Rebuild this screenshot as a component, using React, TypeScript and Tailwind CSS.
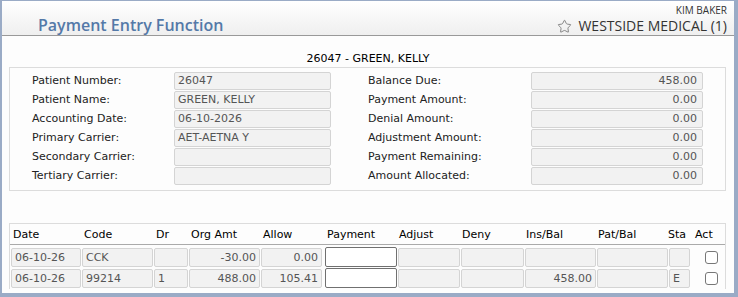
import { Star } from 'lucide-react';

const leftFields = [
  ['Patient Number:', '26047'],
  ['Patient Name:', 'GREEN, KELLY'],
  ['Accounting Date:', '06-10-2026'],
  ['Primary Carrier:', 'AET-AETNA Y'],
  ['Secondary Carrier:', ''],
  ['Tertiary Carrier:', ''],
];

const rightFields = [
  ['Balance Due:', '458.00'],
  ['Payment Amount:', '0.00'],
  ['Denial Amount:', '0.00'],
  ['Adjustment Amount:', '0.00'],
  ['Payment Remaining:', '0.00'],
  ['Amount Allocated:', '0.00'],
];

const rows = [
  { date: '06-10-26', code: 'CCK', dr: '', org: '-30.00', allow: '0.00', ins: '', sta: '' },
  { date: '06-10-26', code: '99214', dr: '1', org: '488.00', allow: '105.41', ins: '458.00', sta: 'E' },
];

const box = 'border border-[#d4d4d4] bg-[#f2f2f2] rounded-[2px] px-[3px] text-[#555] truncate';
const cell = `h-[19px] leading-[17px] ${box}`;
const field = `h-[18px] leading-[16px] ${box}`;

export default function App() {
  return (
    <div
      className="w-[738px] h-[297px] overflow-hidden border-l-2 border-t border-r-4 border-b-4 border-[#9aabc6] bg-[#fdfdfd] text-[11px] text-[#222]"
      style={{ fontFamily: '"DejaVu Sans", Verdana, sans-serif' }}
    >
      {/* header */}
      <div className="h-[35px] border-b border-[#999] bg-gradient-to-b from-white to-[#efefef] flex justify-between">
        <div
          className="pl-[36px] pt-[14px] text-[16px] font-semibold text-[#5479a8] leading-[20px]"
          style={{ fontFamily: '"Open Sans", sans-serif' }}
        >
          Payment Entry Function
        </div>
        <div className="pr-[7px] pt-[4px] flex flex-col items-end text-[#333]" style={{ fontFamily: '"Open Sans", sans-serif' }}>
          <div className="text-[10px] leading-[10px]">KIM BAKER</div>
          <div className="mt-[3px] flex items-center gap-[6px] text-[14px] leading-[16px]">
            <Star size={15} strokeWidth={1.4} className="text-[#777]" />
            <span>WESTSIDE MEDICAL (1)</span>
          </div>
        </div>
      </div>

      {/* patient title */}
      <div className="h-[31px] flex items-center justify-center pt-[15px] text-[11px] text-black">26047 - GREEN, KELLY</div>

      {/* info box */}
      <div className="ml-[7px] w-[717px] h-[124px] border border-[#dcdcdc] pt-[4px] pl-[22px] flex">
        <div className="flex flex-col gap-[1px]">
          {leftFields.map(([l, v]) => (
            <div key={l} className="flex items-center h-[18px]">
              <div className="w-[142px] leading-[18px]">{l}</div>
              <div className={`w-[157px] ${field}`}>{v}</div>
            </div>
          ))}
        </div>
        <div className="ml-[37px] flex flex-col gap-[1px]">
          {rightFields.map(([l, v]) => (
            <div key={l} className="flex items-center h-[18px]">
              <div className="w-[163px] leading-[18px]">{l}</div>
              <div className={`w-[172px] ${field} text-right pr-[5px]`}>{v}</div>
            </div>
          ))}
        </div>
      </div>

      {/* table */}
      <div className="ml-[7px] mt-[32px] w-[717px] h-[66px] border-t border-l border-r border-[#dcdcdc] bg-[#fdfdfd]">
        <div className="h-[21px] border-b border-[#aaa] flex items-center text-black pl-[3px] pt-[2px]">
          <div className="w-[71px]">Date</div>
          <div className="w-[72px]">Code</div>
          <div className="w-[35px]">Dr</div>
          <div className="w-[72px]">Org Amt</div>
          <div className="w-[64px]">Allow</div>
          <div className="w-[72px]">Payment</div>
          <div className="w-[63px]">Adjust</div>
          <div className="w-[64px]">Deny</div>
          <div className="w-[72px]">Ins/Bal</div>
          <div className="w-[70px]">Pat/Bal</div>
          <div className="w-[27px]">Sta</div>
          <div>Act</div>
        </div>
        <div className="pt-[2px] pl-[1px] flex flex-col gap-[1px]">
          {rows.map((r, i) => (
            <div key={i} className="flex items-center gap-[1px]">
              <div className={`w-[70px] ${cell}`}>{r.date}</div>
              <div className={`w-[71px] ${cell}`}>{r.code}</div>
              <div className={`w-[34px] ${cell}`}>{r.dr}</div>
              <div className={`w-[71px] ${cell} text-right`}>{r.org}</div>
              <div className={`w-[61px] ${cell} text-right`}>{r.allow}</div>
              <div className="ml-[2px] w-[72px] h-[20px] border border-[#707070] bg-white rounded-[2px]" />
              <div className={`w-[62px] ${cell}`} />
              <div className={`w-[63px] ${cell}`} />
              <div className={`w-[71px] ${cell} text-right`}>{r.ins}</div>
              <div className={`w-[71px] ${cell}`} />
              <div className={`w-[21px] ${cell}`}>{r.sta}</div>
              <div className="flex-1 flex justify-center pl-[6px]">
                <div className="w-[13px] h-[13px] border border-[#777] rounded-[3px] bg-white" />
              </div>
            </div>
          ))}
        </div>
      </div>
    </div>
  );
}
